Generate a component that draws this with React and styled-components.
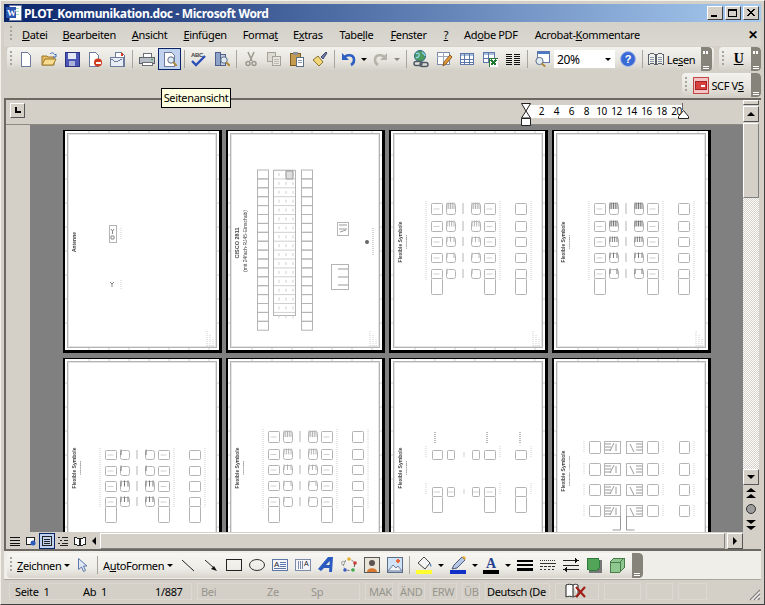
import React from 'react';
import styled, { createGlobalStyle } from 'styled-components';

const GlobalStyle = createGlobalStyle`
  html, body {
    margin: 0;
    padding: 0;
    overflow: hidden;
    background: #d4d0c8;
  }
`;

const UI_FONT = `"Noto Sans", "Liberation Sans", sans-serif`;

const Window = styled.div`
  width: 765px;
  height: 605px;
  box-sizing: border-box;
  padding: 3px 3px 2px;
  display: flex;
  flex-direction: column;
  background: #d4d0c8;
  border-top: 1px solid #f2f1ec;
  border-right: 1px solid #404040;
  border-bottom: 1px solid #404040;
  border-left: 1px solid #f2f1ec;
  font: 11px ${UI_FONT};
  letter-spacing: -0.35px;
  color: #000;
  position: relative;
  overflow: hidden;
`;

const TitleBar = styled.div`
  height: 18px;
  flex: none;
  display: flex;
  align-items: center;
  background: linear-gradient(90deg, #0a246a, #a6caf0);
  padding: 0 2px;
`;

const TitleText = styled.span`
  color: #fff;
  font-weight: 700;
  font-size: 12px;
  letter-spacing: -0.35px;
  margin-left: 2px;
  flex: 1;
  white-space: nowrap;
`;

const WinButtons = styled.div`
  display: flex;
  gap: 2px;
`;

const WinButton = styled.div`
  width: 16px;
  height: 14px;
  box-sizing: border-box;
  background: #d4d0c8;
  border: 1px solid;
  border-color: #fff #404040 #404040 #fff;
  display: flex;
  align-items: center;
  justify-content: center;
`;

const MenuBar = styled.div`
  height: 24px;
  flex: none;
  display: flex;
  align-items: center;
  padding-left: 6px;
  background: linear-gradient(#d4d1c9, #dbd8d1);
`;

const MenuItem = styled.span`
  margin-left: ${(p) => p.$gap}px;
  white-space: nowrap;
`;

const MenuClose = styled.span`
  margin-left: auto;
  margin-right: 3px;
  font-weight: 700;
  font-size: 12px;
`;

const ToolRow = styled.div`
  height: 26px;
  flex: none;
  display: flex;
  align-items: center;
  justify-content: ${(p) => (p.$end ? 'flex-end' : 'flex-start')};
  gap: 5px;
  padding-left: 3px;
`;

const Band = styled.div`
  width: ${(p) => p.$w}px;
  height: 24px;
  display: flex;
  align-items: center;
  border-radius: 4px;
  padding-left: 3px;
  background: linear-gradient(#f3f2ee, #e6e4dd 60%, #d2cfc6);
  box-sizing: border-box;
  overflow: hidden;
`;

const Grip = styled.div`
  width: 2px;
  height: 16px;
  margin-right: ${(p) => p.$mr ?? 2}px;
  flex: none;
  background: repeating-linear-gradient(#a8a59c 0 2px, transparent 2px 4px);
`;

const Btn = styled.div`
  width: ${(p) => p.$w ?? 23}px;
  height: 22px;
  flex: none;
  box-sizing: border-box;
  display: flex;
  align-items: center;
  justify-content: center;
  white-space: nowrap;
  ${(p) => p.$active && 'background: #c1d2ee; border: 1px solid #0a246a;'}
`;

const BoldBtn = styled(Btn)`
  font: 700 14px "Liberation Serif", serif;
  text-decoration: underline;
`;

const Sep = styled.div`
  width: 1px;
  height: 18px;
  flex: none;
  margin: 0 ${(p) => p.$m ?? 2.5}px;
  background: #a8a59c;
`;

const Drop = styled.div`
  width: ${(p) => p.$w ?? 8}px;
  height: 22px;
  flex: none;
  display: flex;
  align-items: center;
  justify-content: center;
  &::after {
    content: '';
    border-top: 3px solid ${(p) => p.$color ?? '#000'};
    border-left: 3px solid transparent;
    border-right: 3px solid transparent;
  }
`;

const Chevron = styled.div`
  width: ${(p) => p.$w ?? 11}px;
  height: 100%;
  flex: none;
  margin-left: ${(p) => p.$ml ?? 0}px;
  background: #86837a;
  border-radius: 0 4px 4px 0;
  position: relative;
  &::before {
    content: '';
    position: absolute;
    left: 2px;
    top: 4px;
    width: 2px;
    height: 3px;
    background: ${(p) => (p.$more ? '#fff' : 'transparent')};
    box-shadow: 3px 0 0 ${(p) => (p.$more ? '#fff' : 'transparent')};
  }
  &::after {
    content: '';
    position: absolute;
    left: 2px;
    bottom: 4px;
    width: 6px;
    height: 1px;
    background: #fff;
    box-shadow: 0 2px 0 #fff;
  }
`;

const Combo = styled.div`
  width: 61px;
  height: 18px;
  flex: none;
  margin: 0 1px;
  background: #fff;
  display: flex;
  align-items: center;
  justify-content: space-between;
  padding-left: 3px;
  box-sizing: border-box;
  font-size: 12px;
`;

const Tooltip = styled.div`
  position: absolute;
  left: 160px;
  top: 87px;
  width: 70px;
  height: 20px;
  box-sizing: border-box;
  background: #ffffe1;
  border: 1px solid #000;
  line-height: 18px;
  text-align: center;
  white-space: nowrap;
  z-index: 3;
`;

const Workspace = styled.div`
  flex: 1;
  min-height: 0;
  display: flex;
  border-top: 2px solid #6b6962;
  border-left: 2px solid #6b6962;
  border-bottom: 2px solid #6b6962;
`;

const MainColumn = styled.div`
  flex: 1;
  min-width: 0;
  display: flex;
  flex-direction: column;
`;

const RulerRow = styled.div`
  height: 25px;
  flex: none;
  box-sizing: border-box;
  display: flex;
  align-items: flex-start;
  justify-content: space-between;
  border-bottom: 1px solid #8c8a83;
`;

const CornerBox = styled.div`
  width: 15px;
  height: 15px;
  margin: 3px 0 0 4px;
  box-sizing: border-box;
  border: 1px solid;
  border-color: #fff #555 #555 #fff;
  display: flex;
  align-items: center;
  justify-content: center;
`;

const RulerStrip = styled.div`
  margin: 5px 60px 0 0;
  width: 156px;
  height: 13px;
  padding-left: 7px;
  box-sizing: border-box;
  background: #fff;
  display: flex;
  position: relative;
  font-size: 10px;
  line-height: 13px;
`;

const RulerNum = styled.span`
  width: 15px;
  flex: none;
  text-align: center;
`;

const Marker = styled.svg`
  position: absolute;
  top: -2px;
  left: ${(p) => p.$left}px;
`;

const Body = styled.div`
  flex: 1;
  min-height: 0;
  display: flex;
`;

const LeftRuler = styled.div`
  width: 24px;
  flex: none;
`;

const DocArea = styled.div`
  flex: 1;
  min-width: 0;
  background: #808080;
  overflow: hidden;
  padding: 5px 0 0 33px;
  box-sizing: border-box;
`;

const PageGrid = styled.div`
  display: grid;
  grid-template-columns: repeat(4, 159px);
  grid-auto-rows: 223px;
  column-gap: 4px;
  row-gap: 5px;
`;

const Sheet = styled.div`
  box-sizing: border-box;
  background: #fff;
  border-style: solid;
  border-color: #000;
  border-width: 1px 3px 3px 2px;
  overflow: hidden;
`;

const SheetArt = styled.svg`
  display: block;
  width: 154px;
  height: 219px;
  filter: blur(0.25px);
`;

const VScroll = styled.div`
  width: 18px;
  flex: none;
  display: flex;
  flex-direction: column;
`;

const SplitBar = styled.div`
  width: 16px;
  height: 5px;
  flex: none;
  margin-bottom: 1px;
  border: 1px solid;
  box-sizing: border-box;
  border-color: #fff #555 #555 #fff;
`;

const ScrollBtn = styled.div`
  width: ${(p) => p.$w ?? 16}px;
  height: 16px;
  flex: none;
  box-sizing: border-box;
  border: 1px solid;
  border-color: #fff #555 #555 #fff;
  background: #d4d0c8;
  display: flex;
  align-items: center;
  justify-content: center;
`;

const FlatArrow = styled(ScrollBtn)`
  border: none;
`;

const Thumb = styled.div`
  width: 16px;
  height: 75px;
  flex: none;
  margin-top: 1px;
  box-sizing: border-box;
  border: 1px solid;
  border-color: #fff #808080 #808080 #fff;
  background: #d4d0c8;
`;

const Track = styled.div`
  flex: 1;
  width: 16px;
  background: repeating-conic-gradient(#fff 0 25%, #d4d0c8 0 50%) 0 0 / 2px 2px;
`;

const Browse = styled.div`
  width: 16px;
  height: 16px;
  flex: none;
  display: flex;
  align-items: center;
  justify-content: center;
`;

const ScrollFoot = styled.div`
  height: 16px;
  flex: none;
`;

const HScroll = styled.div`
  height: 17px;
  flex: none;
  display: flex;
  align-items: center;
`;

const ViewBtn = styled.div`
  width: ${(p) => p.$w ?? 16}px;
  height: 16px;
  flex: none;
  box-sizing: border-box;
  display: flex;
  align-items: center;
  justify-content: center;
  ${(p) => p.$active && 'background: #c1d2ee; border: 1px solid #0a246a;'}
`;

const HThumb = styled.div`
  flex: 1;
  height: 16px;
  margin-right: 2px;
  box-sizing: border-box;
  border: 1px solid;
  border-color: #fff #808080 #808080 #fff;
`;

const DrawRow = styled.div`
  height: 29px;
  flex: none;
  display: flex;
  align-items: center;
  padding-left: 3px;
  background: #f0eee8;
  border-bottom: 1px solid #a8a59c;
  box-sizing: border-box;
`;

const DrawBand = styled(Band)`
  height: 25px;
  background: linear-gradient(#f7f6f3, #eeede7 60%, #d8d5cc);
`;

const TextBtn = styled.span`
  display: inline-block;
  width: ${(p) => (p.$w ? `${p.$w}px` : 'auto')};
  white-space: nowrap;
  margin-left: ${(p) => p.$ml ?? 0}px;
`;

const StatusBar = styled.div`
  height: 22px;
  flex: none;
  display: flex;
  align-items: center;
  padding-left: 5px;
  position: relative;
`;

const Panel = styled.div`
  width: ${(p) => p.$w}px;
  height: 17px;
  flex: none;
  margin-right: 5px;
  box-sizing: border-box;
  border: 1px solid #dcd9d2;
  display: flex;
  align-items: center;
  white-space: nowrap;
  color: ${(p) => (p.$off ? '#96948c' : '#000')};
`;

const PanelText = styled.span`
  width: ${(p) => p.$w}px;
  flex: none;
  display: flex;
  padding-left: ${(p) => p.$pl ?? 0}px;
  box-sizing: border-box;
`;

const SizeGrip = styled.svg`
  position: absolute;
  right: 0;
  bottom: 1px;
`;

/* ---------- toolbar icons ---------- */

const Ico = ({ children, w = 16, h = 16 }) => (
  <svg width={w} height={h} viewBox={`0 0 ${w} ${h}`} shapeRendering="crispEdges">
    {children}
  </svg>
);

const Doc = ({ x = 3, y = 1, w = 10, h = 14, fill = '#fff' }) => (
  <path d={`M${x + .5} ${y + .5}h${w - 4}l3 3v${h - 3}h-${w - 1}z`} fill={fill} stroke="#6d7c9c" />
);

const Lens = ({ x = 9, y = 9, r = 3.2 }) => (
  <g shapeRendering="auto">
    <circle cx={x} cy={y} r={r} fill="#dfeaf5" stroke="#5d6f86" />
    <path d={`M${x + 2.2} ${y + 2.2}l3.5 3.5`} stroke="#b08a3e" strokeWidth="2" />
  </g>
);

const icons = {
  word: (
    <Ico>
      <rect x="3" y="0" width="12" height="15" fill="#fff" stroke="#6d7c9c" />
      <path d="M5 3h8M5 6h8M5 9h8" stroke="#9db" />
      <rect x="0" y="2" width="10" height="11" fill="#2c55b0" />
      <text x="1" y="11" fontSize="9" fontWeight="700" fill="#fff" fontFamily="Liberation Serif, serif">W</text>
    </Ico>
  ),
  new: <Ico><Doc /></Ico>,
  open: (
    <Ico>
      <g shapeRendering="auto">
        <path d="M1 14V5h5l1 1h6v8z" fill="#e8b85c" stroke="#9a7a30" />
        <path d="M1 14l3-6h11l-3 6z" fill="#f8dc90" stroke="#9a7a30" />
        <path d="M9 3c2-2 4-1 5 1l1-1v3h-3" fill="none" stroke="#3d6cc0" />
      </g>
    </Ico>
  ),
  save: (
    <Ico>
      <rect x="1" y="1" width="14" height="14" fill="#4a55b5" stroke="#2b3380" />
      <rect x="4" y="2" width="8" height="6" fill="#e4e8f4" />
      <rect x="5" y="10" width="6" height="5" fill="#aab2d8" />
    </Ico>
  ),
  perm: (
    <Ico>
      <Doc x={2} w={10} />
      <circle cx="11" cy="11.5" r="4" fill="#d23c1e" shapeRendering="auto" />
      <rect x="8.5" y="10.5" width="5" height="2" fill="#fff" />
    </Ico>
  ),
  mail: (
    <Ico>
      <Doc x={5} />
      <rect x="0" y="6" width="13" height="9" fill="#e8ecf4" stroke="#6d7c9c" />
      <path d="M1 8l5 3 6-3" fill="none" stroke="#6d7c9c" />
      <rect x="11" y="2" width="2" height="3" fill="#d23c1e" />
    </Ico>
  ),
  print: (
    <Ico>
      <path d="M4 2h8v5H4z" fill="#fff" stroke="#6b7078" />
      <rect x="0.5" y="6.5" width="15" height="6" fill="#b9bec6" stroke="#5f646c" />
      <rect x="3" y="11" width="10" height="3" fill="#fff" stroke="#6b7078" />
      <rect x="12" y="8" width="2" height="1" fill="#30b040" />
    </Ico>
  ),
  preview: (
    <Ico>
      <Doc x={2} w={11} />
      <Lens x={9} y={9} />
    </Ico>
  ),
  abc: (
    <svg width="18" height="16" viewBox="0 0 18 16">
      <text x="1" y="6" fontSize="6" fontWeight="700" fill="#444" fontFamily="Liberation Sans, sans-serif">ABC</text>
      <path d="M2 10l4 4 9-9" fill="none" stroke="#2b4fb8" strokeWidth="2.4" />
    </svg>
  ),
  research: (
    <Ico>
      <rect x="1" y="1" width="5" height="13" fill="#8ea4c8" stroke="#50608a" />
      <rect x="6" y="3" width="5" height="11" fill="#c6cede" stroke="#50608a" />
      <Lens x={10} y={9} />
    </Ico>
  ),
  cut: (
    <Ico>
      <g shapeRendering="auto" fill="none" stroke="#9a988f" strokeWidth="1.5">
        <path d="M5 1l4 9M11 1l-4 9" />
        <circle cx="5" cy="12.5" r="2" />
        <circle cx="11" cy="12.5" r="2" />
      </g>
    </Ico>
  ),
  copy: (
    <Ico>
      <rect x="1.5" y="1.5" width="8" height="9" fill="#dcdad3" stroke="#a5a399" />
      <rect x="6.5" y="5.5" width="8" height="9" fill="#e7e5df" stroke="#a5a399" />
      <path d="M8 8h5M8 10h5M8 12h5" stroke="#bcbab1" />
    </Ico>
  ),
  paste: (
    <Ico>
      <rect x="1.5" y="2.5" width="10" height="12" fill="#c59b50" stroke="#7a5c24" />
      <rect x="4" y="1" width="5" height="3" fill="#8a8f98" />
      <rect x="7.5" y="6.5" width="7" height="8.5" fill="#fff" stroke="#5d6f86" />
      <path d="M9 9h4M9 11h4" stroke="#8a9ab0" />
    </Ico>
  ),
  brush: (
    <Ico>
      <g shapeRendering="auto">
        <path d="M1 9l5-4 5 6-4 4z" fill="#f2d67a" stroke="#8a7230" />
        <path d="M9 6l5-5 1 1-4 6z" fill="#6f7fa8" stroke="#3e4a70" />
      </g>
    </Ico>
  ),
  undo: (
    <Ico>
      <g shapeRendering="auto" fill="none">
        <path d="M3 7c2-4 10-4 10 2 0 2-1 4-3 5" stroke="#2f5fc0" strokeWidth="2.6" />
        <path d="M1 2v7h7z" fill="#2f5fc0" />
      </g>
    </Ico>
  ),
  redo: (
    <Ico>
      <g shapeRendering="auto" fill="none">
        <path d="M13 7C11 3 3 3 3 9c0 2 1 4 3 5" stroke="#b5b3aa" strokeWidth="2.6" />
        <path d="M15 2v7H8z" fill="#b5b3aa" />
      </g>
    </Ico>
  ),
  link: (
    <svg width="18" height="18" viewBox="0 0 18 18">
      <circle cx="8" cy="6" r="5.5" fill="#4d9a5c" stroke="#2f6a8a" />
      <path d="M4 4c2-2 4 0 3 2s-2 1-3 2M10 2c1 2 3 2 3 4" stroke="#8fd4f0" fill="none" strokeWidth="1.4" />
      <rect x="2" y="11.5" width="8" height="4" rx="2" fill="none" stroke="#505a68" strokeWidth="1.5" />
      <rect x="8" y="12.5" width="8" height="4" rx="2" fill="none" stroke="#505a68" strokeWidth="1.5" />
    </svg>
  ),
  drawTable: (
    <Ico>
      <rect x="1.5" y="1.5" width="12" height="12" fill="#fff" stroke="#7b8ba8" />
      <path d="M1 5h13M7 1v13" stroke="#9aa8c0" />
      <path d="M7 15l1-4 6-7 2 2-6 7z" fill="#e89a3c" stroke="#8a5a20" shapeRendering="auto" />
    </Ico>
  ),
  table: (
    <Ico>
      <rect x="1.5" y="2.5" width="13" height="11" fill="#fff" stroke="#5d78a8" />
      <rect x="2" y="3" width="12" height="2" fill="#a8bedc" />
      <path d="M1 8h14M1 11h14M5.5 3v10M10.5 3v10" stroke="#5d78a8" />
    </Ico>
  ),
  excel: (
    <Ico>
      <rect x="1.5" y="1.5" width="11" height="10" fill="#fff" stroke="#5d78a8" />
      <rect x="2" y="2" width="10" height="2" fill="#a8bedc" />
      <path d="M1 7h12M6 2v9" stroke="#5d78a8" />
      <rect x="7" y="7" width="9" height="9" fill="#fff" stroke="#2d7a3c" />
      <path d="M9 9l5 5M14 9l-5 5" stroke="#1d7a30" strokeWidth="1.5" />
    </Ico>
  ),
  columns: (
    <Ico>
      <path d="M1 3h6M9 3h6M1 5h6M9 5h6M1 7h6M9 7h6M1 9h6M9 9h6M1 11h6M9 11h6M1 13h6M9 13h6" stroke="#111" />
    </Ico>
  ),
  zoom: (
    <Ico>
      <rect x="3.5" y="0.5" width="12" height="11" fill="#fff" stroke="#5d78a8" />
      <rect x="4" y="1" width="11" height="2" fill="#4a78c8" />
      <Lens x={5.5} y={10} r={3.6} />
    </Ico>
  ),
  help: (
    <svg width="16" height="16" viewBox="0 0 16 16">
      <circle cx="8" cy="8" r="7.5" fill="#3a6ad4" stroke="#a8bce8" />
      <text x="8" y="12" textAnchor="middle" fontSize="11" fontWeight="700" fill="#fff" fontFamily="Liberation Sans, sans-serif">?</text>
    </svg>
  ),
  book: (
    <Ico>
      <path d="M.5 3.5c3-1 5-1 7 0v10c-2-1-4-1-7 0zM8.500 3.5c2-1 4-1 7 0v10c-3-1-5-1-7 0z" fill="#f2f0ea" stroke="#58606c" />
      <path d="M2 6h4M2 8h4M2 10h4M10 6h4M10 8h4M10 10h4" stroke="#8894a8" />
    </Ico>
  ),
  scf: (
    <Ico w={17} h={17}>
      <rect x="0.5" y="0.5" width="16" height="16" fill="#f4c4c4" stroke="#c04040" />
      <rect x="3" y="4" width="11" height="9" fill="#d84040" stroke="#a02020" />
      <rect x="8" y="8" width="4" height="2" fill="#fff" />
    </Ico>
  ),
  cursor: (
    <Ico>
      <path d="M3.5 1.5v11l3-2.5 2 4.5 2-1-2-4.5h3.5z" fill="#dfe7f4" stroke="#5d78a8" shapeRendering="auto" />
    </Ico>
  ),
  line: (
    <Ico>
      <path d="M2 3l12 11" stroke="#222" fill="none" shapeRendering="auto" />
    </Ico>
  ),
  arrowLine: (
    <Ico>
      <g shapeRendering="auto">
        <path d="M2 3l9 8" stroke="#222" />
        <path d="M14 14l-6-2 3-3z" fill="#111" />
      </g>
    </Ico>
  ),
  rect: <Ico><rect x="0.5" y="2.5" width="15" height="11" fill="none" stroke="#222" /></Ico>,
  ellipse: <Ico><ellipse cx="8" cy="8" rx="7.5" ry="5.5" fill="none" stroke="#333" shapeRendering="auto" /></Ico>,
  textbox: (
    <Ico>
      <rect x="0.5" y="2.5" width="15" height="11" fill="#f4f6fb" stroke="#5d78a8" />
      <text x="2" y="10" fontSize="8" fontFamily="Liberation Sans, sans-serif" fill="#222">A</text>
      <path d="M8 5h6M8 7h6M8 9h6M2 11h12" stroke="#5d78a8" />
    </Ico>
  ),
  vertical: (
    <Ico>
      <rect x="0.5" y="2.5" width="15" height="11" fill="#f4f6fb" stroke="#7b8ba8" />
      <path d="M3 4v8M5 4v8M7 4v8" stroke="#7b8ba8" />
      <text x="9" y="9" fontSize="7" fontFamily="Liberation Sans, sans-serif" fill="#222">A</text>
    </Ico>
  ),
  wordart: (
    <svg width="16" height="18" viewBox="0 0 16 18">
      <path d="M0 13L10 1h5l-1 15h-3l.3-4H6l-3 3zM8 9h3.5l.3-4z" fill="#2c5bc0" fillRule="evenodd" />
    </svg>
  ),
  diagram: (
    <svg width="16" height="16" viewBox="0 0 16 16">
      <circle cx="8" cy="8" r="5.5" fill="none" stroke="#555" strokeDasharray="2 2" />
      <circle cx="8" cy="2" r="1.8" fill="#e8b030" />
      <circle cx="14" cy="6" r="1.8" fill="#c83c3c" />
      <circle cx="12" cy="13" r="1.8" fill="#3cae50" />
      <circle cx="4" cy="13" r="1.8" fill="#3c5cc8" />
      <circle cx="2" cy="6" r="1.8" fill="#e0e0e0" stroke="#777" strokeWidth=".5" />
    </svg>
  ),
  clipart: (
    <Ico>
      <rect x="0.5" y="0.5" width="15" height="15" fill="#e8e4d8" stroke="#5a5a5a" />
      <circle cx="8" cy="6" r="3" fill="#5a5450" shapeRendering="auto" />
      <path d="M3 15c0-5 10-5 10 0z" fill="#d87830" shapeRendering="auto" />
    </Ico>
  ),
  picture: (
    <Ico>
      <rect x="0.5" y="0.5" width="15" height="15" fill="#cfe2f6" stroke="#5d6f86" />
      <path d="M1 14l5-6 3 3 2-2 4 5z" fill="#f0f2f6" stroke="#6d7c9c" shapeRendering="auto" />
      <circle cx="11" cy="4" r="1.8" fill="#e8683c" />
    </Ico>
  ),
  fill: (
    <svg width="17" height="18" viewBox="0 0 17 18">
      <path d="M2 7l6-6 6 6-5 6z" fill="#f4f4f4" stroke="#444" />
      <path d="M14 7c1 1 2 3 1 4-1-1-1-2-1-4z" fill="#3c78c8" />
      <rect x="0" y="14" width="16" height="4" fill="#ffff30" />
    </svg>
  ),
  pen: (
    <svg width="17" height="18" viewBox="0 0 17 18">
      <path d="M2 13l2-4 8-8 3 3-8 8z" fill="#b8c8e4" stroke="#4a5a80" />
      <path d="M12 1l3 3 1-2-2-2z" fill="#e8b030" />
      <rect x="0" y="14" width="16" height="4" fill="#1030c8" />
    </svg>
  ),
  fontColor: (
    <svg width="17" height="18" viewBox="0 0 17 18">
      <text x="8" y="12" textAnchor="middle" fontSize="14" fontWeight="700" fill="#1f3f90" fontFamily="Liberation Serif, serif">A</text>
      <rect x="0" y="14" width="16" height="4" fill="#000" />
    </svg>
  ),
  lineStyle: (
    <Ico>
      <rect x="0" y="3" width="16" height="2" fill="#000" />
      <rect x="0" y="7" width="16" height="2" fill="#000" />
      <rect x="0" y="11" width="16" height="3" fill="#000" />
    </Ico>
  ),
  dash: (
    <Ico>
      <path d="M0 3.5h16" stroke="#333" strokeDasharray="1 1" />
      <path d="M0 6.5h16" stroke="#333" />
      <path d="M0 9.5h16" stroke="#333" strokeDasharray="3 1" />
      <path d="M0 12.5h16" stroke="#333" strokeDasharray="2 2" />
    </Ico>
  ),
  arrows: (
    <Ico>
      <path d="M0 3.5h13M0 12.5h16M0 8.5h16" stroke="#222" />
      <path d="M16 3.5l-4-2.5v5zM0 12.5l4-2.5v5z" fill="#111" />
    </Ico>
  ),
  shadow: (
    <Ico>
      <rect x="3" y="3" width="13" height="13" rx="1" fill="#777" />
      <rect x="1" y="1" width="12" height="12" rx="2" fill="#52a458" stroke="#2e7c3a" />
    </Ico>
  ),
  cube: (
    <Ico>
      <path d="M1 5l4-4h10v10l-4 4H1z" fill="#8ec88e" stroke="#4a7c4a" />
      <path d="M1 5h10v10M11 5l4-4" fill="none" stroke="#4a7c4a" />
    </Ico>
  ),
  normal: <Ico w={12} h={12}><path d="M1 2h10M1 5h10M1 8h10M1 10h10" stroke="#111" /></Ico>,
  web: (
    <Ico w={12} h={12}>
      <rect x="1.5" y="2.5" width="8" height="7" fill="#fff" stroke="#222" />
      <circle cx="8" cy="8" r="2.5" fill="#2c5bc0" shapeRendering="auto" />
    </Ico>
  ),
  layout: (
    <Ico w={12} h={12}>
      <rect x="1.5" y="1.5" width="9" height="9" fill="none" stroke="#222" />
      <path d="M3 4h6M3 6h6M3 8h6" stroke="#222" />
    </Ico>
  ),
  outline: <Ico w={12} h={12}><path d="M1 2h2M5 2h6M3 5h2M7 5h4M1 8h2M5 8h6M3 10h8" stroke="#222" /></Ico>,
  read: (
    <Ico w={12} h={12}>
      <path d="M.5 2.5l5 1v7l-5-1zM11.5 2.5l-5 1v7l5-1z" fill="#fff" stroke="#222" />
    </Ico>
  ),
  noSpell: (
    <svg width="22" height="16" viewBox="0 0 22 16">
      <path d="M1 14V2c2-1 5-1 7 0v11M8 2c2-1 3-1 5 0v11M1 14c2-1 5-1 7 0 2-1 3-1 5 0" fill="#fff" stroke="#222" />
      <path d="M11 4l9 10M20 4l-9 10" stroke="#a02018" strokeWidth="2.2" />
    </svg>
  ),
};

const WinGlyph = ({ type }) => (
  <Ico w={10} h={10}>
    {type === 'min' && <rect x="1" y="7" width="6" height="2" fill="#000" />}
    {type === 'max' && <path d="M.5 1.5h8v7h-8zM1 2.5h7" fill="none" stroke="#000" />}
    {type === 'close' && <path d="M1 1l7 7M8 1L1 8M2 1l7 7M9 1L2 8" stroke="#000" shapeRendering="auto" />}
  </Ico>
);

const Tri = ({ dir, size = 4 }) => {
  const paths = {
    up: `M0 ${size}L${size} 0l${size} ${size}z`,
    down: `M0 0h${size * 2}L${size} ${size}z`,
    left: `M${size} 0v${size * 2}L0 ${size}z`,
    right: `M0 0v${size * 2}L${size} ${size}z`,
  };
  const horizontal = dir === 'left' || dir === 'right';
  return (
    <svg width={horizontal ? size : size * 2} height={horizontal ? size * 2 : size}>
      <path d={paths[dir]} fill="#000" />
    </svg>
  );
};

/* ---------- page thumbnails ---------- */

const LINE = '#b4b4b4';
const SOFT = '#cfcfcf';

const FrameMarks = () => {
  const xs = [24, 44, 64, 84, 104, 124, 144];
  const ys = [24, 48, 72, 96, 120, 144, 168, 192];
  return (
    <>
      <rect x="2.5" y="2.5" width="149" height="214" fill="none" stroke={LINE} />
      <rect x="3.5" y="3.5" width="147" height="212" fill="none" stroke="#e4e4e4" />
      {xs.map((x) => (
        <path key={x} d={`M${x} 0v2M${x} 217v2`} stroke={SOFT} />
      ))}
      {ys.map((y) => (
        <path key={y} d={`M0 ${y}h2M152 ${y}h2`} stroke={SOFT} />
      ))}
      <path d="M142 200v15M145 204v11M148 208v7M142 215h8" stroke={SOFT} strokeDasharray="1 1" />
    </>
  );
};

const SideTitle = ({ x, y, size = 5, bold, children }) => (
  <text
    transform={`translate(${x} ${y}) rotate(-90)`}
    textAnchor="middle"
    fontSize={size}
    fontWeight={bold ? 700 : 400}
    letterSpacing="0"
    fontFamily="Liberation Sans, sans-serif"
    fill="#444"
  >
    {children}
  </text>
);

const Label = ({ x, y1, y2, color = SOFT }) => (
  <path d={`M${x} ${y1}V${y2}`} stroke={color} strokeDasharray="1 1" />
);

const Box = ({ x, y, w, h, dash = true }) => (
  <>
    <rect x={x + 0.5} y={y + 0.5} width={w} height={h} rx="0.8" fill="#fff" stroke={LINE} />
    {dash && <path d={`M${x + w / 2 - 3} ${y + h / 2 + 0.5}h6`} stroke={SOFT} />}
  </>
);

const Coil = ({ x, y, w, h, teeth, dark }) => (
  <>
    <rect x={x + 0.5} y={y + 0.5} width={w} height={h} rx="2" fill="#fff" stroke={LINE} />
    {Array.from({ length: teeth }, (_, i) => (
      <path
        key={i}
        d={`M${x + 1 + (i * (w - 2)) / Math.max(teeth - 1, 1)} ${y - 0.5}v${h / 2 + 1}`}
        stroke={dark ? '#777' : LINE}
      />
    ))}
  </>
);

const SymbolRows = ({ rows, teeth, dark }) => {
  const last = rows.length - 1;
  return (
    <>
      <Label x={37} y1={rows[0][0] - 2} y2={rows[last][0] + rows[last][1] + 2} />
      <Label x={111} y1={rows[0][0] - 2} y2={rows[last][0] + rows[last][1] + 2} />
      <Label x={142} y1={rows[0][0] - 2} y2={rows[last][0] + rows[last][1] + 2} />
      {rows.map(([y, h], i) => {
        const count = teeth ? teeth[i] : Math.max(1, 5 - i);
        return (
          <g key={y}>
            <Box x={42} y={y} w={11} h={h} />
            <Coil x={57} y={y} w={9} h={h} teeth={count} dark={dark} />
            <path d={`M74 ${y}v${h}`} stroke={LINE} />
            <Coil x={82} y={y} w={9} h={h} teeth={count} dark={dark} />
            <Box x={95} y={y} w={11} h={h} />
            <Box x={126} y={y} w={11} h={h} dash={false} />
          </g>
        );
      })}
      {[42, 95, 126].map((x) => (
        <Box key={x} x={x} y={rows[last][0] + rows[last][1]} w={11} h={16} dash={false} />
      ))}
    </>
  );
};

const PageFlexible = ({ rows, teeth, dark, titleY = 112 }) => (
  <>
    <SideTitle x={13} y={titleY} bold>Flexible Symbole</SideTitle>
    <SideTitle x={18} y={titleY} size={2.5}>Paarfunktion</SideTitle>
    <SymbolRows rows={rows} teeth={teeth} dark={dark} />
  </>
);

const PageAntenne = () => (
  <>
    <SideTitle x={13} y={112} bold>Antenne</SideTitle>
    <rect x="46.5" y="95.5" width="7" height="17" fill="none" stroke={LINE} />
    <path d="M48 99l1.5 2 1.5-2M49.5 101v3M48 106h3v3h-3z" fill="none" stroke="#888" />
    <Label x={58} y1={98} y2={110} />
    <path d="M47 152l2 2 2-2M49 154v3" fill="none" stroke="#888" />
    <Label x={58} y1={150} y2={160} />
  </>
);

const PageCisco = () => {
  const cells = Array.from({ length: 18 }, (_, i) => 40 + i * 8.9);
  return (
    <>
      <SideTitle x={13} y={113} size={5.5} bold>CISCO 2811</SideTitle>
      <SideTitle x={21} y={111} size={5}>(mit 24fach-RJ45-Einschub)</SideTitle>
      {cells.map((y) => (
        <g key={y}>
          <rect x="31.5" y={y} width="11" height="8.9" fill="none" stroke={LINE} />
          <rect x="75.5" y={y} width="11" height="8.9" fill="none" stroke={LINE} />
        </g>
      ))}
      <rect x="47.5" y="40.5" width="22" height="145" fill="none" stroke={LINE} />
      {cells.slice(0, 17).map((y) => (
        <path key={y} d={`M48 ${y}h21M53 ${y + 3}v3M60 ${y + 3}v3M67 ${y + 3}v3`} stroke={SOFT} />
      ))}
      <path d="M60 41h7v8h-7z" fill="#ddd" stroke="#999" />
      <rect x="111.5" y="92.5" width="11" height="13" fill="none" stroke={LINE} />
      <path d="M113 95h8M113 99h8M114 102l6-2" stroke="#999" />
      <circle cx="141" cy="112" r="2" fill="#666" />
      <Label x={147} y1={98} y2={125} color="#aaa" />
      <rect x="105.5" y="134.5" width="17" height="25" fill="none" stroke={LINE} />
      <path d="M112 139h10M112 147h10M112 155h10" stroke="#999" />
    </>
  );
};

const PageSingle = () => (
  <>
    <SideTitle x={13} y={110} bold>Flexible Symbole</SideTitle>
    <SideTitle x={18} y={110} size={2.5}>Paarfunktion</SideTitle>
    <Label x={46} y1={74} y2={85} color="#777" />
    <Label x={98} y1={74} y2={85} color="#777" />
    <Label x={131} y1={74} y2={85} color="#777" />
    <Label x={37} y1={88} y2={100} />
    <Label x={37} y1={125} y2={137} />
    <Label x={111} y1={88} y2={100} />
    <Label x={111} y1={125} y2={137} />
    <Label x={142} y1={88} y2={100} />
    <Label x={142} y1={125} y2={137} />
    {[[92, 9], [129, 9]].map(([y, h]) => (
      <g key={y}>
        <Box x={43} y={y} w={10} h={h} dash={y > 100} />
        <Box x={58} y={y} w={7} h={h} dash={y > 100} />
        <path d={`M75 ${y + 2}v5`} stroke={SOFT} />
        <Box x={83} y={y} w={7} h={h} dash={y > 100} />
        <Box x={95} y={y} w={11} h={h} dash={y > 100} />
        <Box x={126} y={y} w={11} h={h} dash={false} />
      </g>
    ))}
    {[43, 95, 126].map((x) => (
      <Box key={x} x={x} y={138} w={x === 43 ? 10 : 11} h={16} dash={false} />
    ))}
  </>
);

const PagePowerPairs = () => {
  const rows = [[83, 12], [105, 12], [126, 11], [147, 11]];
  return (
    <>
      <SideTitle x={13} y={113} bold>Flexible Symbole</SideTitle>
      <SideTitle x={18} y={113} size={2.5}>Paarfunktion + Power Inject</SideTitle>
      {rows.map(([y, h]) => (
        <g key={y}>
          <Label x={32} y1={y} y2={y + h} />
          <Box x={37} y={y} w={11} h={h} dash={false} />
          <rect x="52.5" y={y + 0.5} width="16" height={h} fill="#fff" stroke={LINE} />
          <path d={`M53 ${y + 3}h6M53 ${y + 6}h6M53 ${y + 9}h6M58 ${y + 10}l4-8M64 ${y + 3}v7`} stroke="#999" />
          <rect x="74.5" y={y + 0.5} width="16" height={h} fill="#fff" stroke={LINE} />
          <path d={`M84 ${y + 3}h6M84 ${y + 6}h6M84 ${y + 9}h6M78 ${y + 3}l4 8`} stroke="#999" />
          <Box x={95} y={y} w={11} h={h} dash={false} />
          <Label x={111} y1={y} y2={y + h} />
          <Box x={127} y={y} w={10} h={h} dash={false} />
          <Label x={142} y1={y} y2={y + h} />
        </g>
      ))}
      <path d="M68.5 158v14h-8M74.5 158v14h8" fill="none" stroke="#999" />
    </>
  );
};

const sameRows = [[73, 11], [91, 10], [107, 9], [123, 9], [139, 9]];

const Page = ({ children }) => (
  <Sheet>
    <SheetArt viewBox="0 0 154 219">
      <FrameMarks />
      {/* page border takes 2px on the left, the drawing coordinates are from the outer edge */}
      <g transform="translate(-2 -1)">{children}</g>
    </SheetArt>
  </Sheet>
);

/* ---------- main ---------- */

// text before the underlined letter, the letter, text after it, gap on the left
const menu = [
  ['', 'D', 'atei', 8],
  ['', 'B', 'earbeiten', 15],
  ['', 'A', 'nsicht', 16],
  ['', 'E', 'infügen', 16],
  ['Forma', 't', '', 16],
  ['E', 'x', 'tras', 15],
  ['Tabe', 'l', 'le', 17],
  ['', 'F', 'enster', 17],
  ['', '?', '', 17],
  ['Ad', 'o', 'be PDF', 16],
  ['Acrobat-', 'K', 'ommentare', 17],
];

const ToolButtons = ({ names }) =>
  names.map((name) => (
    <Btn key={name}>{icons[name]}</Btn>
  ));

export default function App() {
  return (
    <>
      <GlobalStyle />
      <Window>
        <TitleBar>
          {icons.word}
          <TitleText>PLOT_Kommunikation.doc - Microsoft Word</TitleText>
          <WinButtons>
            <WinButton><WinGlyph type="min" /></WinButton>
            <WinButton><WinGlyph type="max" /></WinButton>
            <WinButton><WinGlyph type="close" /></WinButton>
          </WinButtons>
        </TitleBar>

        <MenuBar>
          <Grip />
          {menu.map(([before, key, after, gap]) => (
            <MenuItem key={before + key + after} $gap={gap}>
              {before}<u>{key}</u>{after}
            </MenuItem>
          ))}
          <MenuClose>✕</MenuClose>
        </MenuBar>

        <ToolRow>
          <Band $w={709}>
            <Grip />
            <ToolButtons names={['new', 'open', 'save', 'perm', 'mail']} />
            <Sep />
            <Btn>{icons.print}</Btn>
            <Btn $active>{icons.preview}</Btn>
            <Sep />
            <ToolButtons names={['abc', 'research']} />
            <Sep />
            <ToolButtons names={['cut', 'copy', 'paste', 'brush']} />
            <Sep />
            <Btn>{icons.undo}</Btn>
            <Drop />
            <Btn>{icons.redo}</Btn>
            <Drop $w={12} $color="#8a8880" />
            <Sep />
            <ToolButtons names={['link', 'drawTable', 'table', 'excel', 'columns']} />
            <Sep />
            <Btn>{icons.zoom}</Btn>
            <Combo>20%<Drop $w={14} /></Combo>
            <Btn>{icons.help}</Btn>
            <Sep />
            <Btn $w={53}>
              {icons.book}
              <TextBtn $ml={3}>Le<u>s</u>en</TextBtn>
            </Btn>
            <Chevron $ml={3} $more />
          </Band>
          <Band $w={42}>
            <Grip />
            <BoldBtn $w={25}>U</BoldBtn>
            <Chevron $w={10} $more />
          </Band>
        </ToolRow>

        <ToolRow $end>
          <Band $w={79}>
            <Grip $mr={6} />
            {icons.scf}
            <TextBtn $ml={2} $w={41}>SCF V<u>5</u></TextBtn>
            <Chevron $w={10} />
          </Band>
        </ToolRow>

        <Workspace>
          <MainColumn>
            <RulerRow>
              <CornerBox>
                <Ico w={7} h={7}><path d="M1 0v6h6V4H3V0z" fill="#000" /></Ico>
              </CornerBox>
              <RulerStrip>
                {[2, 4, 6, 8, 10, 12, 14, 16, 18, 20].map((n) => (
                  <RulerNum key={n}>{n}</RulerNum>
                ))}
                <Marker $left={-6} width="11" height="24" viewBox="0 0 11 24">
                  <path d="M.5 .5h9L5 8zM5 8l4.5 7h-9zM.5 15.5h9v7h-9z" fill="#fff" stroke="#222" />
                </Marker>
                <Marker $left={151} width="11" height="18" viewBox="0 0 11 18">
                  <path d="M5.5 7.5l5 6v2h-10v-2z" fill="#fff" stroke="#222" />
                  <path d="M4.5 0v7" stroke="#666" />
                </Marker>
              </RulerStrip>
            </RulerRow>
            <Body>
              <LeftRuler />
              <DocArea>
                <PageGrid>
                  <Page><PageAntenne /></Page>
                  <Page><PageCisco /></Page>
                  <Page><PageFlexible rows={sameRows} /></Page>
                  <Page><PageFlexible rows={sameRows} teeth={[5, 5, 4, 3, 2]} dark /></Page>
                  <Page>
                    <PageFlexible rows={[[92, 9], [108, 9], [123, 10], [139, 9]]} teeth={[1, 1, 3, 3]} dark titleY={110} />
                  </Page>
                  <Page><PageFlexible rows={sameRows} titleY={110} /></Page>
                  <Page><PageSingle /></Page>
                  <Page><PagePowerPairs /></Page>
                </PageGrid>
              </DocArea>
            </Body>
            <HScroll>
              <ViewBtn $w={17}>{icons.normal}</ViewBtn>
              <ViewBtn>{icons.web}</ViewBtn>
              <ViewBtn $active>{icons.layout}</ViewBtn>
              <ViewBtn>{icons.outline}</ViewBtn>
              <ViewBtn $w={17}>{icons.read}</ViewBtn>
              <FlatArrow $w={12}><Tri dir="left" /></FlatArrow>
              <HThumb />
              <ScrollBtn><Tri dir="right" /></ScrollBtn>
            </HScroll>
          </MainColumn>
          <VScroll>
            <SplitBar />
            <ScrollBtn><Tri dir="up" /></ScrollBtn>
            <Thumb />
            <Track />
            <ScrollBtn><Tri dir="down" /></ScrollBtn>
            <Browse>
              <svg width="10" height="12"><path d="M0 5l5-4 5 4zM0 11l5-4 5 4z" fill="#000" /></svg>
            </Browse>
            <Browse>
              <svg width="12" height="12"><circle cx="6" cy="6" r="4.5" fill="#9c9c9c" stroke="#333" /></svg>
            </Browse>
            <Browse>
              <svg width="10" height="12"><path d="M0 1l5 4 5-4zM0 7l5 4 5-4z" fill="#000" /></svg>
            </Browse>
            <ScrollFoot />
          </VScroll>
        </Workspace>

        <DrawRow>
          <DrawBand $w={636}>
            <Grip />
            <TextBtn $ml={3} $w={43}><u>Z</u>eichnen</TextBtn>
            <Drop $w={13} />
            <Btn $w={20}>{icons.cursor}</Btn>
            <Sep $m={4} />
            <TextBtn $ml={1} $w={60}>A<u>u</u>toFormen</TextBtn>
            <Drop $w={13} />
            <ToolButtons names={['line', 'arrowLine', 'rect', 'ellipse', 'textbox', 'vertical', 'wordart', 'diagram', 'clipart', 'picture']} />
            <Sep $m={3} />
            <Btn>{icons.fill}</Btn>
            <Drop $w={10} />
            <Btn $w={24}>{icons.pen}</Btn>
            <Drop $w={10} />
            <Btn>{icons.fontColor}</Btn>
            <Drop $w={10} />
            <ToolButtons names={['lineStyle', 'dash', 'arrows', 'shadow', 'cube']} />
            <Chevron $ml={4} />
          </DrawBand>
        </DrawRow>

        <StatusBar>
          <Panel $w={183}>
            <PanelText $w={73} $pl={5}>Seite&nbsp;&nbsp;1</PanelText>
            <PanelText $w={72}>Ab&nbsp;&nbsp;1</PanelText>
            <PanelText $w={36}>1/887</PanelText>
          </Panel>
          <Panel $w={163} $off>
            <PanelText $w={69} $pl={3}>Bei</PanelText>
            <PanelText $w={44}>Ze</PanelText>
            <PanelText $w={30}>Sp</PanelText>
          </Panel>
          <Panel $w={28} $off><PanelText $w={26} $pl={3}>MAK</PanelText></Panel>
          <Panel $w={27} $off><PanelText $w={25} $pl={1}>ÄND</PanelText></Panel>
          <Panel $w={27} $off><PanelText $w={25} $pl={1}>ERW</PanelText></Panel>
          <Panel $w={18} $off><PanelText $w={16} $pl={1}>ÜB</PanelText></Panel>
          <Panel $w={65}><PanelText $w={63} $pl={1}>Deutsch (De</PanelText></Panel>
          <Panel $w={44}><PanelText $w={42} $pl={9}>{icons.noSpell}</PanelText></Panel>
          <Panel $w={37} />
          <Panel $w={27} />
          <Panel $w={29} />
          <SizeGrip width="13" height="13" viewBox="0 0 13 13">
            <path d="M12 2L2 12M12 6l-6 6M12 10l-2 2" stroke="#808080" strokeWidth="1.2" />
            <path d="M12 3.5L3.5 12M12 7.5L7.5 12" stroke="#fff" />
          </SizeGrip>
        </StatusBar>

        <Tooltip>Seitenansicht</Tooltip>
      </Window>
    </>
  );
}
